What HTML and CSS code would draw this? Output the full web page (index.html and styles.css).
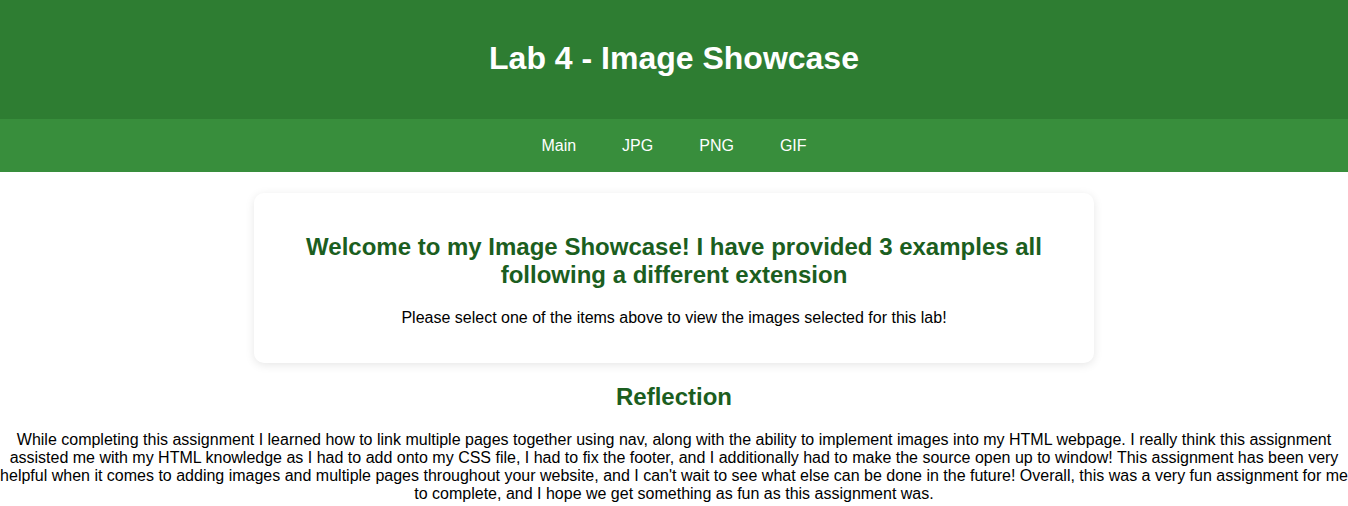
FILE: index.html
```html
<!DOCTYPE html>
<html lang="en">
<head>
<meta charset="utf-8">
<title>Lab 4 - Image Showcase</title>
<link rel="stylesheet" href="styles.css">
</head>
<body>
<header class="site-header">
  <h1 class="site-title">Lab 4 - Image Showcase</h1>
</header>
<nav class="site-nav">
  <a href="#" class="nav-link">Main</a>
  <a href="#" class="nav-link">JPG</a>
  <a href="#" class="nav-link">PNG</a>
  <a href="#" class="nav-link">GIF</a>
</nav>
<main class="content">
  <section class="card">
    <h2 class="card-title">Welcome to my Image Showcase! I have provided 3 examples all following a different extension</h2>
    <p class="card-text">Please select one of the items above to view the images selected for this lab!</p>
  </section>
  <h2 class="section-title">Reflection</h2>
  <p class="reflection">While completing this assignment I learned how to link multiple pages together using nav, along with the ability to implement images into my HTML webpage. I really think this assignment assisted me with my HTML knowledge as I had to add onto my CSS file, I had to fix the footer, and I additionally had to make the source open up to window! This assignment has been very helpful when it comes to adding images and multiple pages throughout your website, and I can't wait to see what else can be done in the future! Overall, this was a very fun assignment for me to complete, and I hope we get something as fun as this assignment was.</p>
</main>
</body>
</html>
```

FILE: styles.css
```css
body {
  margin: 0;
  font-family: "Liberation Sans", Arial, sans-serif;
  font-size: 16px;
  color: #000;
  background: #fff;
}

.site-header {
  background: #2e7d32;
  color: #fff;
  text-align: center;
  padding: 39px 0 42px;
}

.site-title {
  margin: 0;
  font-size: 32px;
  line-height: 38px;
  font-weight: bold;
}

.site-nav {
  background: #388e3c;
  display: flex;
  justify-content: center;
  gap: 46px;
  padding: 18px 0 17px;
  height: 18px;
}

.nav-link {
  color: #fff;
  text-decoration: none;
  font-size: 16px;
  line-height: 18px;
}

.content {
  text-align: center;
}

.card {
  background: #fff;
  width: 800px;
  margin: 21px auto 20px;
  padding: 20px;
  border-radius: 10px;
  box-shadow: 0 2px 10px rgba(0, 0, 0, 0.1);
}

.card-title {
  color: #1b5e20;
  font-size: 24px;
  margin: 20px 0;
}

.card-text {
  margin: 16px 0;
}

.section-title {
  color: #1b5e20;
  font-size: 24px;
  margin: 20px 0;
}

.reflection {
  margin: 16px 0;
}
```
